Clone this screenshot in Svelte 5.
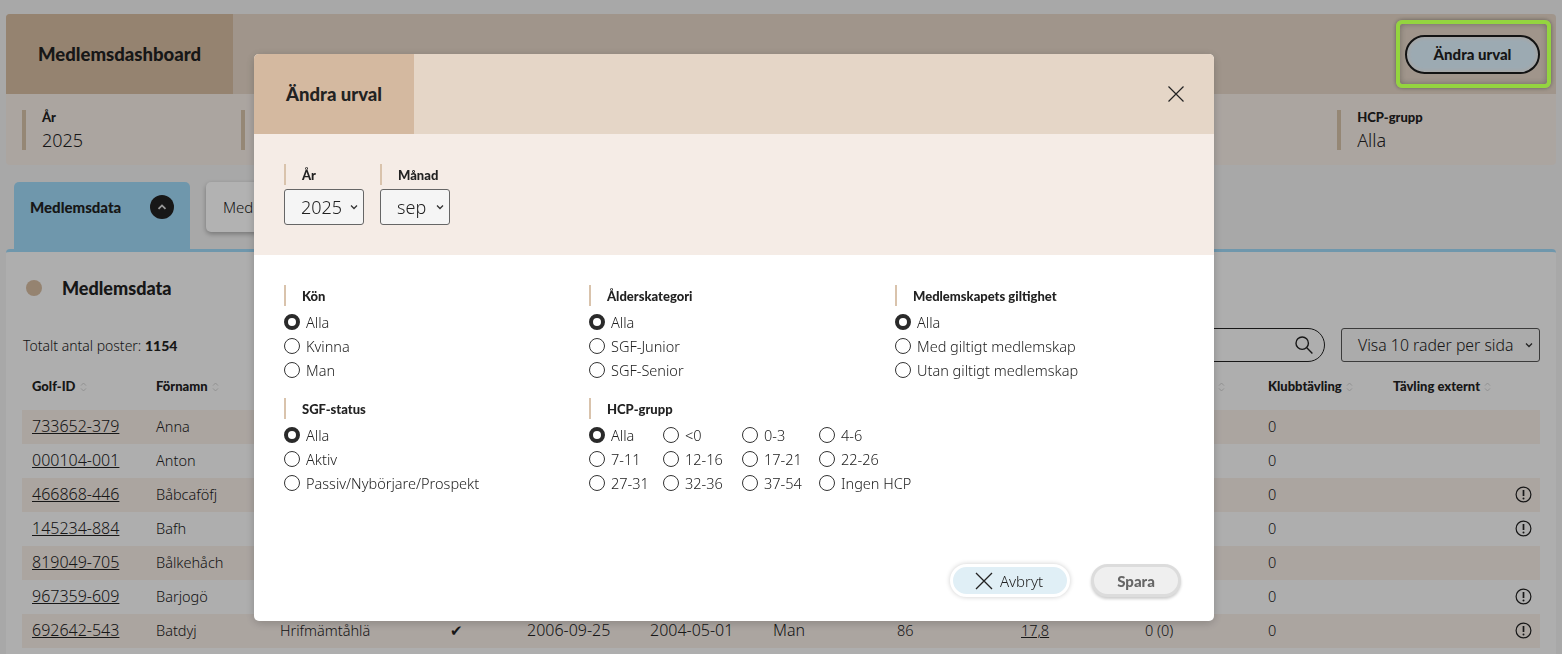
<script>
  const summary = [
    ["År", "2025"], ["Månad", "sep"], ["Kön", "Alla"], ["Ålderskategori", "Alla"],
    ["Medlemskapets giltighet", "Alla"], ["SGF-status", "Alla"], ["HCP-grupp", "Alla"]
  ];
  const columns = [
    ["Golf-ID", 124], ["Förnamn", 124], ["Efternamn", 168], ["Aktiv", 79], ["Född", 123], ["Medlem sedan", 123],
    ["Kön", 124], ["Ålder", 124], ["HCP", 124], ["Ronder de...", 123], ["Klubbtävling", 125], ["Tävling externt", 157]
  ];
  const rows = [
    { id: "733652-379", name: "Anna", klubb: "0" },
    { id: "000104-001", name: "Anton", klubb: "0" },
    { id: "466868-446", name: "Båbcaföfj", klubb: "0", warn: true },
    { id: "145234-884", name: "Bafh", klubb: "0", warn: true },
    { id: "819049-705", name: "Bålkehåch", klubb: "0" },
    { id: "967359-609", name: "Barjogö", klubb: "0", warn: true },
    { id: "692642-543", name: "Batdyj", last: "Hrifmämtåhlä", active: true, born: "2006-09-25", since: "2004-05-01", sex: "Man", age: "86", hcp: "17,8", rounds: "0 (0)", klubb: "0", warn: true }
  ];
  const groups = [
    { title: "Kön", name: "kon", options: ["Alla", "Kvinna", "Man"] },
    { title: "Ålderskategori", name: "alder", options: ["Alla", "SGF-Junior", "SGF-Senior"] },
    { title: "Medlemskapets giltighet", name: "giltig", options: ["Alla", "Med giltigt medlemskap", "Utan giltigt medlemskap"] },
    { title: "SGF-status", name: "status", options: ["Alla", "Aktiv", "Passiv/Nybörjare/Prospekt"] }
  ];
  const hcp = ["Alla", "<0", "0-3", "4-6", "7-11", "12-16", "17-21", "22-26", "27-31", "32-36", "37-54", "Ingen HCP"];
</script>

<div class="page">
  <header class="topbar">
    <h1>Medlemsdashboard</h1>
    <button class="change">Ändra urval</button>
  </header>
  <div class="summary">
    {#each summary as [label, value]}
      <div class="sum-item">
        <strong>{label}</strong>
        <span>{value}</span>
      </div>
    {/each}
  </div>

  <div class="tabs">
    <div class="tab active">
      <b>Medlemsdata</b>
      <span class="round">
        <svg width="12" height="12" viewBox="0 0 12 12"><path d="M2.5 7.8 6 4.4l3.5 3.4" fill="none" stroke="#ddd" stroke-width="1.8" /></svg>
      </span>
    </div>
    <div class="tab">Medlemsutveckling</div>
  </div>

  <section class="card">
    <div class="card-title"><i class="dot"></i><h2>Medlemsdata</h2></div>
    <div class="tools">
      <p>Totalt antal poster: <b>1154</b></p>
      <div class="search">
        <svg width="20" height="20" viewBox="0 0 20 20" fill="none" stroke="#222" stroke-width="1.4"><circle cx="8.2" cy="8.2" r="6.2" /><path d="m12.8 12.8 5.6 5.6" /></svg>
      </div>
      <div class="perpage">
        <span>Visa 10 rader per sida</span>
        <svg width="8" height="6" viewBox="0 0 8 6"><path d="M1 1.5 4 4.5l3-3" fill="none" stroke="#333" stroke-width="1.3" /></svg>
      </div>
    </div>

    <table>
      <colgroup>
        {#each columns as [, w]}<col style="width:{w}px" />{/each}
      </colgroup>
      <thead>
        <tr>
          {#each columns as [title]}
            <th>{title}<svg width="7" height="10" viewBox="0 0 7 10"><path d="M1 3.6 3.5 1 6 3.6M1 6.4 3.5 9 6 6.4" fill="none" stroke="#c8c8c8" stroke-width=".8" /></svg></th>
          {/each}
        </tr>
      </thead>
      <tbody>
        {#each rows as r}
          <tr>
            <td class="num"><a href="#id">{r.id}</a></td>
            <td>{r.name}</td>
            <td>{r.last ?? ""}</td>
            <td class="check">{r.active ? "✔" : ""}</td>
            <td class="num">{r.born ?? ""}</td>
            <td class="num">{r.since ?? ""}</td>
            <td class="num">{r.sex ?? ""}</td>
            <td>{r.age ?? ""}</td>
            <td>{#if r.hcp}<a href="#hcp">{r.hcp}</a>{/if}</td>
            <td>{r.rounds ?? ""}</td>
            <td>{r.klubb}</td>
            <td class="warn">
              {#if r.warn}
                <svg width="17" height="17" viewBox="0 0 17 17"><circle cx="8.5" cy="8.5" r="7.4" fill="none" stroke="#222" stroke-width="1.2" /><path d="M8.5 4v6" stroke="#222" stroke-width="1.7" /><circle cx="8.5" cy="12.4" r="1" fill="#222" /></svg>
              {/if}
            </td>
          </tr>
        {/each}
      </tbody>
    </table>
  </section>
</div>

<div class="backdrop"></div>
<div class="highlight"></div>

<div class="modal-wrap">
  <div class="modal">
    <div class="modal-head">
      <h3>Ändra urval</h3>
      <button class="close" aria-label="Stäng">
        <svg width="18" height="18" viewBox="0 0 18 18"><path d="m1.5 1.5 15 15m0-15-15 15" stroke="#222" stroke-width="1.2" /></svg>
      </button>
    </div>

    <div class="period">
      <div class="field">
        <div class="label">År</div>
        <div class="select year">
          <select><option>2025</option></select>
          <svg width="8" height="6" viewBox="0 0 8 6"><path d="M1 1.5 4 4.5l3-3" fill="none" stroke="#333" stroke-width="1.3" /></svg>
        </div>
      </div>
      <div class="field">
        <div class="label">Månad</div>
        <div class="select month">
          <select><option>sep</option></select>
          <svg width="8" height="6" viewBox="0 0 8 6"><path d="M1 1.5 4 4.5l3-3" fill="none" stroke="#333" stroke-width="1.3" /></svg>
        </div>
      </div>
    </div>

    <div class="filters">
      {#each groups as g}
        <div class="group">
          <div class="label">{g.title}</div>
          {#each g.options as opt, i}
            <label class="radio"><input type="radio" name={g.name} checked={i === 0} />{opt}</label>
          {/each}
        </div>
      {/each}
      <div class="group">
        <div class="label">HCP-grupp</div>
        <div class="hcp">
          {#each hcp as opt, i}
            <label class="radio"><input type="radio" name="hcp" checked={i === 0} />{opt}</label>
          {/each}
        </div>
      </div>
    </div>

    <div class="actions">
      <button class="cancel">
        <svg width="18" height="18" viewBox="0 0 18 18"><path d="m1 1 16 16m0-16L1 17" stroke="#222" stroke-width="1.3" /></svg>
        Avbryt
      </button>
      <button class="save">Spara</button>
    </div>
  </div>
</div>

<style>
  :global(body) {
    margin: 0;
    background: #f1f1f1;
    color: #222;
    font-family: "Noto Sans", Lato, sans-serif;
    font-weight: 300;
    overflow: hidden;
  }
  h1, h2, h3, p { margin: 0; }
  b, strong, th, h1, h2, h3, .label { font-family: Lato, "Noto Sans", sans-serif; }

  .page {
    height: 654px;
    padding: 14px 6px 0;
    box-sizing: border-box;
    overflow: hidden;
  }
  .topbar {
    height: 80px;
    background: #e5d6c7;
    display: flex;
    align-items: center;
    justify-content: space-between;
    padding-right: 16px;
    border-radius: 4px 4px 0 0;
  }
  h1 {
    width: 227px;
    height: 80px;
    box-sizing: border-box;
    padding-left: 32px;
    line-height: 80px;
    background: #d6bca1;
    font-size: 18.5px;
    font-weight: 900;
    border-radius: 4px 0 0 0;
  }
  .change {
    width: 135px;
    height: 39px;
    border: 2px solid #1c1c1c;
    border-radius: 20px;
    background: #e0f4ff;
    box-shadow: inset 0 0 3px 2px #eee;
    color: #222;
    font-family: Lato, sans-serif;
    font-size: 15px;
    font-weight: 900;
  }
  .summary {
    height: 71px;
    background: #f5ece6;
    padding: 16px 0 0 16px;
    box-sizing: border-box;
    display: grid;
    grid-template-columns: repeat(7, 219.2px);
    border-radius: 0 0 4px 4px;
  }
  .sum-item {
    height: 40px;
    border-left: 4px solid #d6c2a8;
    padding-left: 16px;
    display: flex;
    flex-direction: column;
  }
  .sum-item strong { font-size: 13px; font-weight: 900; line-height: 15px; }
  .sum-item span { font-size: 18px; line-height: 25px; padding-top: 3px; }

  .tabs {
    display: flex;
    gap: 16px;
    padding: 17px 0 0 8px;
    height: 67px;
    box-sizing: content-box;
    align-items: flex-start;
  }
  .tab {
    width: 176px;
    height: 50px;
    background: #fff;
    border-radius: 5px;
    box-shadow: 0 2px 5px rgba(0, 0, 0, .3);
    padding: 0 17px;
    box-sizing: border-box;
    display: flex;
    align-items: center;
    justify-content: space-between;
    font-size: 15px;
  }
  .tab.active {
    height: 67px;
    padding: 0 16px 0 16px;
    align-items: flex-start;
    background: #a0d8f7;
    border-radius: 5px 5px 0 0;
    box-shadow: none;
    line-height: 51px;
  }
  .tab.active b { font-size: 15px; font-weight: 900; }
  .round {
    width: 24px;
    height: 24px;
    margin-top: 13px;
    border-radius: 50%;
    background: #222;
    display: flex;
    align-items: center;
    justify-content: center;
  }

  .card {
    background: #f9f9f9;
    border-top: 3px solid #a0d8f7;
    border-radius: 4px 4px 0 0;
    height: 405px;
    padding: 0 16px;
    box-sizing: border-box;
  }
  .card-title {
    display: flex;
    align-items: center;
    height: 72px;
    padding-left: 4px;
  }
  .dot {
    width: 16px;
    height: 16px;
    border-radius: 50%;
    background: #d6bca1;
    margin-right: 20px;
  }
  h2 { font-size: 18px; font-weight: 900; }
  .tools {
    height: 34px;
    margin-top: 4px;
    display: flex;
    align-items: center;
    font-size: 14px;
  }
  .tools p { flex: 1; margin-left: 1px; }
  .tools b { font-weight: 900; }
  .search {
    width: 400px;
    height: 34px;
    box-sizing: border-box;
    border: 1px solid #222;
    border-radius: 17px;
    display: flex;
    align-items: center;
    justify-content: flex-end;
    padding-right: 10px;
  }
  .perpage {
    width: 199px;
    height: 34px;
    margin: 0 0 0 16px;
    box-sizing: border-box;
    border: 1px solid #555;
    border-radius: 3px;
    display: flex;
    align-items: center;
    justify-content: space-between;
    padding: 0 6px 0 16px;
    font-size: 15.8px;
    background: #f5f5f5;
  }

  table {
    width: 1518px;
    margin-top: 8px;
    border-collapse: collapse;
    table-layout: fixed;
    font-size: 14.5px;
  }
  th {
    height: 32px;
    padding: 0 0 8px 10px;
    text-align: left;
    font-size: 13px;
    font-weight: 900;
    white-space: nowrap;
    overflow: hidden;
  }
  th svg { margin-left: 4px; vertical-align: -1px; }
  td {
    height: 32px;
    padding: 0 0 2px 10px;
    white-space: nowrap;
  }
  tbody tr:nth-child(odd) { background: #f5ece6; }
  td a { color: #222; }
  .num { font-size: 16px; }
  .check { font-size: 15px; padding-left: 12px; }
  .warn { text-align: right; padding-right: 8px; }
  .warn svg { display: block; margin-left: auto; }

  .backdrop {
    position: fixed;
    inset: 0;
    background: rgba(0, 0, 0, .3);
  }
  .highlight {
    position: fixed;
    left: 1396px;
    top: 20px;
    width: 155px;
    height: 68px;
    box-sizing: border-box;
    border: 4px solid #94d43f;
    border-radius: 6px;
    box-shadow: 0 0 4px rgba(0, 0, 0, .4), inset 0 0 6px rgba(0, 0, 0, .3);
  }
  .modal-wrap {
    position: fixed;
    inset: 0;
    padding: 54px 0 0 254px;
    pointer-events: none;
  }
  .modal {
    width: 960px;
    height: 567px;
    background: #fff;
    border-radius: 5px;
    overflow: hidden;
    box-shadow: 0 2px 10px rgba(0, 0, 0, .2);
    display: flex;
    flex-direction: column;
    pointer-events: auto;
  }
  .modal-head {
    height: 80px;
    flex: none;
    background: #e5d6c7;
    display: flex;
    align-items: center;
    justify-content: space-between;
    padding-right: 29px;
  }
  h3 {
    width: 160px;
    box-sizing: border-box;
    padding-left: 32px;
    line-height: 80px;
    background: #d4b9a0;
    font-size: 18.5px;
    font-weight: 900;
  }
  .close { background: none; border: 0; padding: 0; height: 18px; }
  .period {
    height: 121px;
    flex: none;
    background: #f5ece6;
    padding: 30px 30px 0;
    box-sizing: border-box;
    display: flex;
    gap: 16px;
  }
  .label {
    height: 21px;
    line-height: 23px;
    border-left: 2px solid #d9c3ac;
    padding-left: 16px;
    font-size: 13px;
    font-weight: 900;
  }
  .select {
    position: relative;
    margin-top: 4px;
    height: 36px;
  }
  .select select {
    appearance: none;
    height: 36px;
    width: 100%;
    box-sizing: border-box;
    border: 1px solid #666;
    border-radius: 3px;
    background: #f5f5f5;
    color: #222;
    font: 300 18px "Noto Sans", sans-serif;
    padding-left: 16px;
  }
  .select svg { position: absolute; right: 6px; top: 15px; }
  .year { width: 80px; }
  .month { width: 70px; }

  .filters {
    padding: 30px 0 0 30px;
    display: grid;
    grid-template-columns: 305px 306px 305px;
    row-gap: 16px;
  }
  .group .label { margin-bottom: 4px; }
  .radio {
    display: flex;
    align-items: center;
    gap: 6px;
    height: 24px;
    font-size: 14.5px;
    white-space: nowrap;
  }
  .radio input {
    appearance: none;
    width: 16px;
    height: 16px;
    margin: 0;
    border: 1px solid #333;
    border-radius: 50%;
    background: #fff;
  }
  .radio input:checked { border: 4.5px solid #2a2a2a; }
  .hcp {
    display: grid;
    grid-template-columns: 74px 79px 77px auto;
  }

  .actions {
    margin-top: auto;
    padding: 0 33px 24px 0;
    display: flex;
    justify-content: flex-end;
    align-items: center;
    gap: 21px;
  }
  .cancel, .save {
    height: 33px;
    border-radius: 17px;
    font-size: 15px;
    display: flex;
    align-items: center;
    justify-content: center;
  }
  .cancel {
    width: 120px;
    gap: 7px;
    padding: 0 8px 0 6px;
    border: 3px solid #fff;
    background: #e0eff6;
    color: #222;
    font-family: "Noto Sans", sans-serif;
    font-weight: 300;
    box-shadow: 0 0 5px rgba(0, 0, 0, .2);
  }
  .save {
    width: 90px;
    border: 3px solid #dcdcdc;
    background: #efefef;
    color: #666;
    font-family: Lato, sans-serif;
    font-weight: 900;
    box-shadow: 0 2px 3px rgba(0, 0, 0, .2);
  }
</style>
